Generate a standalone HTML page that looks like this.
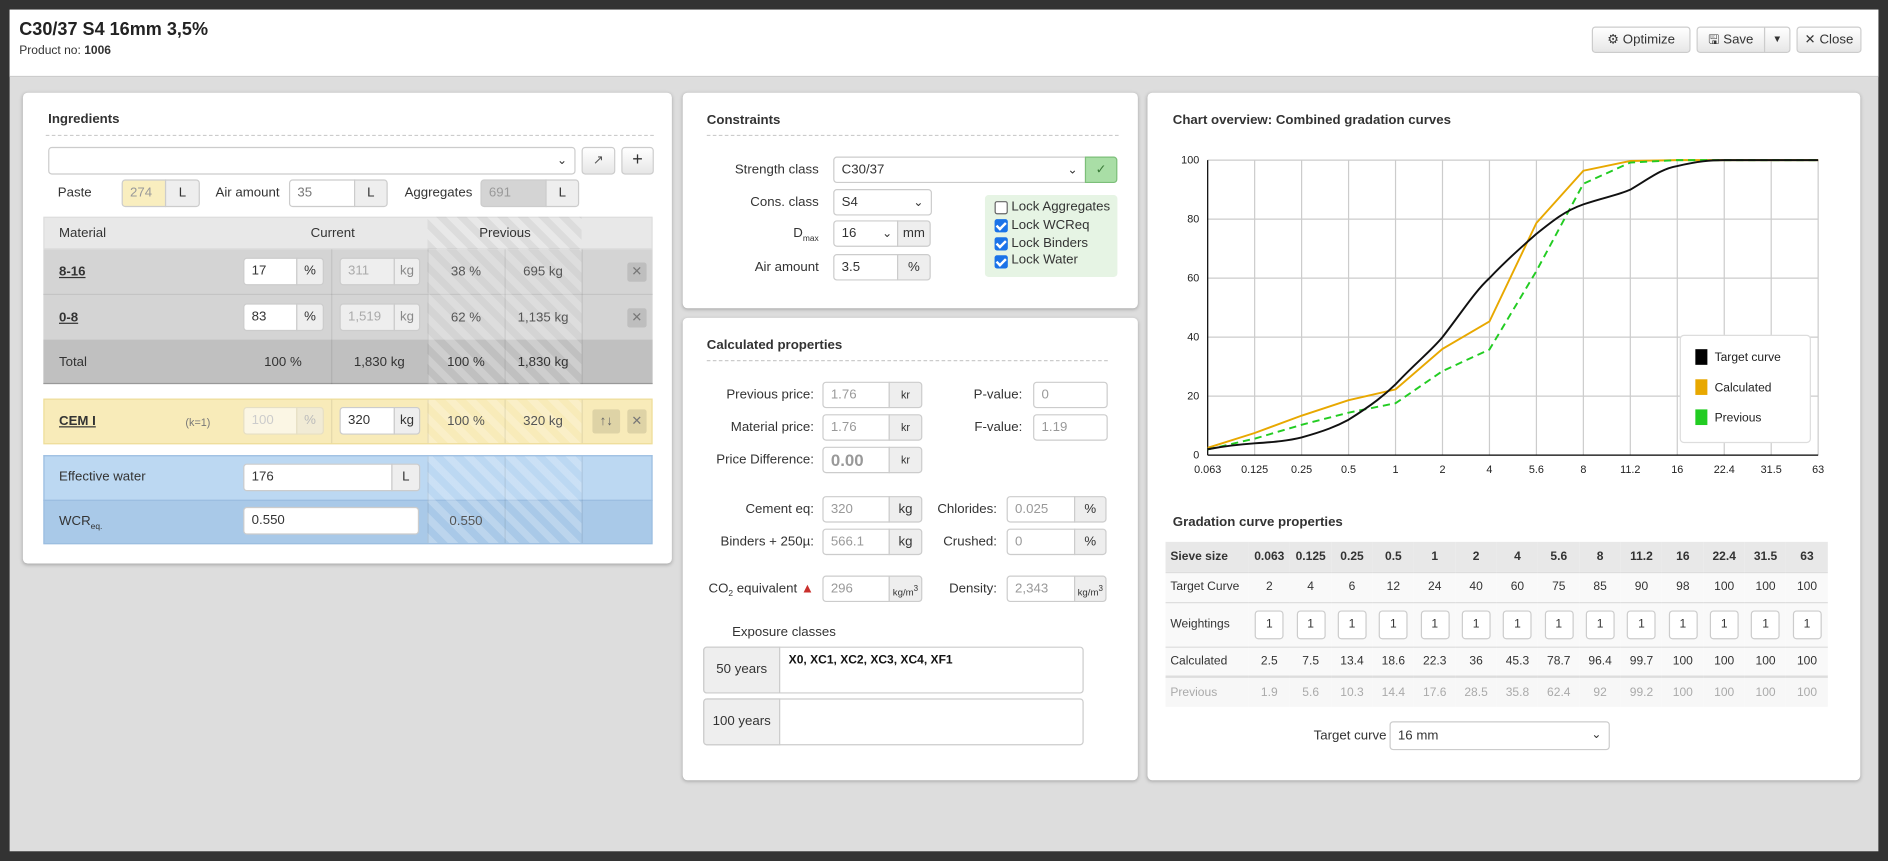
<!DOCTYPE html>
<html><head><meta charset="utf-8"><style>
*{box-sizing:border-box;margin:0;padding:0}
html,body{width:1888px;height:861px;overflow:hidden;background:#333}
#s{position:absolute;left:0;top:0;width:1568px;height:715px;transform:scale(1.20408);transform-origin:0 0;font-family:"Liberation Sans",Arial,sans-serif;font-size:11px;color:#333}
.a{position:absolute}
.p{position:absolute;background:#fff;border-radius:4px;box-shadow:0 1px 3px rgba(0,0,0,.25)}
.h{position:absolute;font-weight:bold;font-size:11px;color:#333}
.dl{position:absolute;border-top:1px dashed #ccc;height:0}
.in{position:absolute;border:1px solid #ccc;background:#fff;border-radius:3px 0 0 3px;padding:0 6px;line-height:21px;font-size:11px;color:#333}
.ad{position:absolute;border:1px solid #ccc;background:#eee;border-radius:0 3px 3px 0;text-align:center;line-height:21px;font-size:11px;color:#333}
.r{position:absolute;text-align:right}
.c{position:absolute;text-align:center}
.btn{position:absolute;border:1px solid #ccc;background:linear-gradient(#fff,#e6e6e6);border-radius:3px;text-align:center;line-height:20px;color:#333}
.hat{background-image:repeating-linear-gradient(45deg,rgba(255,255,255,.22) 0 6px,rgba(255,255,255,0) 6px 12px)}
.hatd{background-image:repeating-linear-gradient(45deg,rgba(0,0,0,.05) 0 6px,rgba(0,0,0,0) 6px 12px)}
.vl{position:absolute;width:1px;background:rgba(0,0,0,.08)}
.x{position:absolute;width:16px;height:16px;background:rgba(0,0,0,.1);border-radius:2px;text-align:center;line-height:16px;color:#777;font-size:11px}
.cb{position:absolute;width:11px;height:11px;border-radius:2px;background:#1a73e8}
.cb:after{content:"";position:absolute;left:3px;top:1px;width:3px;height:6px;border:solid #fff;border-width:0 2px 2px 0;transform:rotate(45deg)}
sub{font-size:7px;line-height:0}
td{text-align:center;height:25px}
.w{margin:auto;width:24px;height:24px;border:1px solid #ccc;border-radius:3px;background:#fff;line-height:22px}
</style></head><body><div id="s">
<div class="a" style="left:8px;top:8px;width:1552px;height:699px;background:#ddd"></div>
<div class="a" style="left:8px;top:8px;width:1552px;height:56px;background:#fff;border-bottom:1px solid #ccc"></div>
<div class="a" style="left:16px;top:16px;font-size:15px;font-weight:bold;color:#222">C30/37 S4 16mm 3,5%</div>
<div class="a" style="left:16px;top:37px;font-size:10px;color:#333">Product no: <b>1006</b></div>
<div class="btn" style="left:1322px;top:22px;width:82px;height:22px">⚙ Optimize</div>
<div class="btn" style="left:1409px;top:22px;width:57px;height:22px;border-radius:3px 0 0 3px">🖫 Save</div>
<div class="btn" style="left:1465px;top:22px;width:22px;height:22px;border-radius:0 3px 3px 0;font-size:8px">▼</div>
<div class="btn" style="left:1492px;top:22px;width:54px;height:22px">✕ Close</div>

<div class="p" style="left:19px;top:77px;width:539px;height:391px"></div>
<div class="h" style="left:40px;top:93px">Ingredients</div>
<div class="dl" style="left:38px;top:112px;width:505px"></div>
<div class="in" style="left:40px;top:122px;width:438px;height:23px;border-radius:3px"><span style="position:absolute;right:6px;top:0;font-size:10px">⌄</span></div>
<div class="btn" style="left:483px;top:122px;width:28px;height:23px;color:#555">↗</div>
<div class="btn" style="left:516px;top:122px;width:27px;height:23px;font-size:15px">+</div>
<div class="a" style="left:48px;top:154px">Paste</div>
<div class="in" style="left:101px;top:149px;width:37px;height:23px;background:#f9eebf;color:#999">274</div>
<div class="ad" style="left:137px;top:149px;width:29px;height:23px">L</div>
<div class="a" style="left:179px;top:154px">Air amount</div>
<div class="in" style="left:240px;top:149px;width:55px;height:23px;color:#777">35</div>
<div class="ad" style="left:294px;top:149px;width:28px;height:23px">L</div>
<div class="a" style="left:336px;top:154px">Aggregates</div>
<div class="in" style="left:399px;top:149px;width:55px;height:23px;background:#d4d4d4;color:#999">691</div>
<div class="ad" style="left:453px;top:149px;width:28px;height:23px">L</div>

<div class="a" style="left:36px;top:180px;width:506px;height:27px;background:#e8e8e8;border:1px solid #ddd"></div>
<div class="a hatd" style="left:355px;top:180px;width:128px;height:27px"></div>
<div class="a" style="left:49px;top:188px">Material</div>
<div class="a" style="left:258px;top:188px">Current</div>
<div class="a" style="left:398px;top:188px">Previous</div>
<div class="a" style="left:36px;top:207px;width:506px;height:75px;background:#d4d4d4"></div>
<div class="a" style="left:36px;top:244px;width:506px;height:1px;background:#c4c4c4"></div>
<div class="a" style="left:36px;top:282px;width:506px;height:37px;background:#c0c0c0;border-bottom:1px solid #999"></div>
<div class="a hat" style="left:355px;top:207px;width:128px;height:112px"></div>
<div class="vl" style="left:275px;top:207px;height:112px"></div><div class="vl" style="left:355px;top:207px;height:112px"></div><div class="vl" style="left:419px;top:207px;height:112px"></div><div class="vl" style="left:483px;top:207px;height:112px"></div>
<div class="a" style="left:49px;top:220px;font-weight:bold;text-decoration:underline">8-16</div>
<div class="in" style="left:202px;top:214px;width:45px;height:23px">17</div><div class="ad" style="left:246px;top:214px;width:23px;height:23px">%</div>
<div class="in" style="left:282px;top:214px;width:46px;height:23px;background:#eee;color:#aaa">311</div><div class="ad" style="left:327px;top:214px;width:22px;height:23px;color:#888">kg</div>
<div class="c" style="left:355px;top:220px;width:64px;color:#555">38 %</div><div class="c" style="left:419px;top:220px;width:64px;color:#555">695 kg</div>
<div class="x" style="left:521px;top:218px">✕</div>
<div class="a" style="left:49px;top:258px;font-weight:bold;text-decoration:underline">0-8</div>
<div class="in" style="left:202px;top:252px;width:45px;height:23px">83</div><div class="ad" style="left:246px;top:252px;width:23px;height:23px">%</div>
<div class="in" style="left:282px;top:252px;width:46px;height:23px;background:#eee;color:#aaa">1,519</div><div class="ad" style="left:327px;top:252px;width:22px;height:23px;color:#888">kg</div>
<div class="c" style="left:355px;top:258px;width:64px;color:#555">62 %</div><div class="c" style="left:419px;top:258px;width:64px;color:#555">1,135 kg</div>
<div class="x" style="left:521px;top:256px">✕</div>
<div class="a" style="left:49px;top:295px">Total</div>
<div class="c" style="left:205px;top:295px;width:60px">100 %</div>
<div class="c" style="left:280px;top:295px;width:70px">1,830 kg</div>
<div class="c" style="left:355px;top:295px;width:64px">100 %</div><div class="c" style="left:419px;top:295px;width:64px">1,830 kg</div>

<div class="a" style="left:36px;top:331px;width:506px;height:38px;background:#f8ebb9;border:1px solid #eedd99"></div>
<div class="a hat" style="left:355px;top:332px;width:128px;height:36px"></div>
<div class="vl" style="left:275px;top:332px;height:36px"></div><div class="vl" style="left:355px;top:332px;height:36px"></div><div class="vl" style="left:419px;top:332px;height:36px"></div><div class="vl" style="left:483px;top:332px;height:36px"></div>
<div class="a" style="left:49px;top:344px;font-weight:bold;text-decoration:underline">CEM I</div>
<div class="a" style="left:154px;top:346px;font-size:9px;color:#777">(k=1)</div>
<div class="in" style="left:202px;top:338px;width:45px;height:23px;background:#fbf6e4;color:#ccc;border-color:#e6dfc4">100</div><div class="ad" style="left:246px;top:338px;width:23px;height:23px;color:#bbb;background:#f1ebd5;border-color:#e6dfc4">%</div>
<div class="in" style="left:282px;top:338px;width:46px;height:23px">320</div><div class="ad" style="left:327px;top:338px;width:22px;height:23px">kg</div>
<div class="c" style="left:355px;top:344px;width:64px;color:#555">100 %</div><div class="c" style="left:419px;top:344px;width:64px;color:#555">320 kg</div>
<div class="x" style="left:492px;top:340px;width:23px;height:20px;line-height:20px;color:#666">↑↓</div>
<div class="x" style="left:521px;top:340px;height:20px;line-height:20px">✕</div>

<div class="a" style="left:36px;top:378px;width:506px;height:38px;background:#bcd8f2;border:1px solid #9bbde0;border-bottom:none"></div>
<div class="a" style="left:36px;top:415px;width:506px;height:37px;background:#a9c9e8;border:1px solid #9bbde0"></div>
<div class="a hat" style="left:355px;top:379px;width:128px;height:72px"></div>
<div class="vl" style="left:355px;top:379px;height:72px"></div><div class="vl" style="left:419px;top:379px;height:72px"></div><div class="vl" style="left:483px;top:379px;height:72px"></div>
<div class="a" style="left:49px;top:390px">Effective water</div>
<div class="in" style="left:202px;top:385px;width:124px;height:23px">176</div><div class="ad" style="left:325px;top:385px;width:24px;height:23px">L</div>
<div class="a" style="left:49px;top:427px">WCR<sub>eq.</sub></div>
<div class="in" style="left:202px;top:421px;width:146px;height:23px;border-radius:3px">0.550</div>
<div class="c" style="left:355px;top:427px;width:64px;color:#555">0.550</div>

<div class="p" style="left:567px;top:77px;width:378px;height:179px"></div>
<div class="h" style="left:587px;top:94px">Constraints</div>
<div class="dl" style="left:587px;top:112px;width:342px"></div>
<div class="r" style="left:560px;top:135px;width:120px">Strength class</div>
<div class="in" style="left:692px;top:130px;width:210px;height:22px">C30/37<span style="position:absolute;right:6px;font-size:10px">⌄</span></div>
<div class="a" style="left:901px;top:130px;width:27px;height:22px;background:#a9dea6;border:1px solid #7cbf79;border-radius:0 3px 3px 0;text-align:center;line-height:20px;color:#3a7a38">✓</div>
<div class="r" style="left:560px;top:162px;width:120px">Cons. class</div>
<div class="in" style="left:692px;top:157px;width:82px;height:22px;border-radius:3px">S4<span style="position:absolute;right:6px;font-size:10px">⌄</span></div>
<div class="r" style="left:560px;top:188px;width:120px">D<sub>max</sub></div>
<div class="in" style="left:692px;top:183px;width:54px;height:22px">16<span style="position:absolute;right:4px;font-size:10px">⌄</span></div><div class="ad" style="left:745px;top:183px;width:28px;height:22px">mm</div>
<div class="r" style="left:560px;top:216px;width:120px">Air amount</div>
<div class="in" style="left:692px;top:211px;width:54px;height:22px">3.5</div><div class="ad" style="left:745px;top:211px;width:28px;height:22px">%</div>
<div class="a" style="left:818px;top:162px;width:110px;height:68px;background:#e6f4e4;border-radius:3px"></div>
<div class="a" style="left:826px;top:167px;width:11px;height:11px;border:1px solid #666;border-radius:2px;background:#fff"></div>
<div class="a" style="left:840px;top:166px">Lock Aggregates</div>
<div class="cb" style="left:826px;top:182px"></div><div class="a" style="left:840px;top:181px">Lock WCReq</div>
<div class="cb" style="left:826px;top:197px"></div><div class="a" style="left:840px;top:196px">Lock Binders</div>
<div class="cb" style="left:826px;top:212px"></div><div class="a" style="left:840px;top:210px">Lock Water</div>

<div class="p" style="left:567px;top:264px;width:378px;height:384px"></div>
<div class="h" style="left:587px;top:281px">Calculated properties</div>
<div class="dl" style="left:587px;top:299px;width:333px"></div>
<div class="r" style="left:540px;top:322px;width:136px">Previous price:</div>
<div class="in" style="left:683px;top:317px;width:56px;height:22px;color:#999">1.76</div><div class="ad" style="left:738px;top:317px;width:28px;height:22px;font-size:9px">kr</div>
<div class="r" style="left:540px;top:349px;width:136px">Material price:</div>
<div class="in" style="left:683px;top:344px;width:56px;height:22px;color:#999">1.76</div><div class="ad" style="left:738px;top:344px;width:28px;height:22px;font-size:9px">kr</div>
<div class="r" style="left:540px;top:376px;width:136px">Price Difference:</div>
<div class="in" style="left:683px;top:371px;width:56px;height:22px;color:#999;font-weight:bold;font-size:14px">0.00</div><div class="ad" style="left:738px;top:371px;width:28px;height:22px;font-size:9px">kr</div>
<div class="r" style="left:760px;top:322px;width:89px">P-value:</div>
<div class="in" style="left:858px;top:317px;width:62px;height:22px;border-radius:3px;color:#999">0</div>
<div class="r" style="left:760px;top:349px;width:89px">F-value:</div>
<div class="in" style="left:858px;top:344px;width:62px;height:22px;border-radius:3px;color:#999">1.19</div>
<div class="r" style="left:540px;top:417px;width:136px">Cement eq:</div>
<div class="in" style="left:683px;top:412px;width:56px;height:22px;color:#999">320</div><div class="ad" style="left:738px;top:412px;width:28px;height:22px">kg</div>
<div class="r" style="left:540px;top:444px;width:136px">Binders + 250µ:</div>
<div class="in" style="left:683px;top:439px;width:56px;height:22px;color:#999">566.1</div><div class="ad" style="left:738px;top:439px;width:28px;height:22px">kg</div>
<div class="r" style="left:740px;top:417px;width:88px">Chlorides:</div>
<div class="in" style="left:836px;top:412px;width:57px;height:22px;color:#999">0.025</div><div class="ad" style="left:892px;top:412px;width:27px;height:22px">%</div>
<div class="r" style="left:740px;top:444px;width:88px">Crushed:</div>
<div class="in" style="left:836px;top:439px;width:57px;height:22px;color:#999">0</div><div class="ad" style="left:892px;top:439px;width:27px;height:22px">%</div>
<div class="r" style="left:540px;top:483px;width:136px">CO<sub>2</sub> equivalent <span style="color:#c9302c">▲</span></div>
<div class="in" style="left:683px;top:478px;width:56px;height:22px;color:#999">296</div><div class="ad" style="left:738px;top:478px;width:28px;height:22px;font-size:8px">kg/m<sup>3</sup></div>
<div class="r" style="left:740px;top:483px;width:88px">Density:</div>
<div class="in" style="left:836px;top:478px;width:57px;height:22px;color:#999">2,343</div><div class="ad" style="left:892px;top:478px;width:27px;height:22px;font-size:8px">kg/m<sup>3</sup></div>
<div class="a" style="left:608px;top:519px">Exposure classes</div>
<div class="a" style="left:584px;top:537px;width:316px;height:39px;border:1px solid #ccc;border-radius:3px;background:#fff"></div>
<div class="a" style="left:584px;top:537px;width:64px;height:39px;border:1px solid #ccc;background:#eee;border-radius:3px 0 0 3px;text-align:center;line-height:37px">50 years</div>
<div class="a" style="left:655px;top:543px;font-size:10px;font-weight:bold;color:#111">X0, XC1, XC2, XC3, XC4, XF1</div>
<div class="a" style="left:584px;top:580px;width:316px;height:39px;border:1px solid #ccc;border-radius:3px;background:#fff"></div>
<div class="a" style="left:584px;top:580px;width:64px;height:39px;border:1px solid #ccc;background:#eee;border-radius:3px 0 0 3px;text-align:center;line-height:37px">100 years</div>

<div class="p" style="left:953px;top:77px;width:592px;height:571px"></div>
<div class="h" style="left:974px;top:94px">Chart overview: Combined gradation curves</div>
<svg class="a" style="left:960px;top:120px" width="580" height="290" font-family="Liberation Sans,Arial,sans-serif" font-size="9" fill="#222">
<g stroke="#ccc" stroke-width="1">
<line x1="43" x2="550" y1="209" y2="209"/><line x1="43" x2="550" y1="160" y2="160"/><line x1="43" x2="550" y1="111" y2="111"/><line x1="43" x2="550" y1="62" y2="62"/><line x1="43" x2="550" y1="13" y2="13"/>
<line x1="82" x2="82" y1="13" y2="258"/><line x1="121" x2="121" y1="13" y2="258"/><line x1="160" x2="160" y1="13" y2="258"/><line x1="199" x2="199" y1="13" y2="258"/><line x1="238" x2="238" y1="13" y2="258"/><line x1="277" x2="277" y1="13" y2="258"/><line x1="316" x2="316" y1="13" y2="258"/><line x1="355" x2="355" y1="13" y2="258"/><line x1="394" x2="394" y1="13" y2="258"/><line x1="433" x2="433" y1="13" y2="258"/><line x1="472" x2="472" y1="13" y2="258"/><line x1="511" x2="511" y1="13" y2="258"/><line x1="550" x2="550" y1="13" y2="258"/>
</g>
<line x1="43" x2="43" y1="13" y2="258" stroke="#000"/><line x1="43" x2="550" y1="258" y2="258" stroke="#000"/>
<g text-anchor="end"><text x="36" y="261">0</text><text x="36" y="212">20</text><text x="36" y="163">40</text><text x="36" y="114">60</text><text x="36" y="65">80</text><text x="36" y="16">100</text></g>
<g text-anchor="middle"><text x="43" y="273">0.063</text><text x="82" y="273">0.125</text><text x="121" y="273">0.25</text><text x="160" y="273">0.5</text><text x="199" y="273">1</text><text x="238" y="273">2</text><text x="277" y="273">4</text><text x="316" y="273">5.6</text><text x="355" y="273">8</text><text x="394" y="273">11.2</text><text x="433" y="273">16</text><text x="472" y="273">22.4</text><text x="511" y="273">31.5</text><text x="550" y="273">63</text></g>
<polyline fill="none" stroke="#e8a800" stroke-width="1.6" points="43,251.9 82,239.6 121,225.2 160,212.4 199,203.4 238,169.8 277,147 316,65.2 355,21.8 394,13.7 433,13 472,13 511,13 550,13"/>
<polyline fill="none" stroke="#2c2" stroke-width="1.6" stroke-dasharray="6,4" points="43,253.3 82,244.3 121,232.8 160,222.7 199,214.9 238,188.2 277,170.3 316,105.1 355,32.6 394,15 433,13 472,13 511,13 550,13"/>
<path fill="none" stroke="#111" stroke-width="1.6" d="M43,253.1 C60,250 70,249 82,248.2 C100,247 110,246 121,243.3 C140,238 150,234 160,228.6 C180,216 190,208 199,199.2 C215,182 228,172 238,160 C255,138 265,122 277,111 C292,95 305,84 316,74.25 C330,63 340,55 355,49.75 C372,44 384,42 394,37.5 C410,28 420,20 433,17.9 C450,14 460,13 472,13 L550,13"/>
<rect x="435.5" y="158.5" width="108" height="89" rx="3" fill="#fff" stroke="#ddd"/>
<rect x="448" y="170" width="10" height="13" fill="#000"/><text x="464" y="180" font-size="10">Target curve</text>
<rect x="448" y="195" width="10" height="13" fill="#e8a800"/><text x="464" y="205" font-size="10">Calculated</text>
<rect x="448" y="220" width="10" height="13" fill="#2c2"/><text x="464" y="230" font-size="10">Previous</text>
</svg>
<div class="h" style="left:974px;top:428px">Gradation curve properties</div>
<table class="a" style="left:968px;top:450px;width:550px;border-collapse:collapse;font-size:10px;table-layout:fixed">
<colgroup><col style="width:69px"></colgroup>
<tr style="background:#e8e8e8;font-weight:bold;height:25px"><td style="text-align:left;padding-left:4px">Sieve size</td><td>0.063</td><td>0.125</td><td>0.25</td><td>0.5</td><td>1</td><td>2</td><td>4</td><td>5.6</td><td>8</td><td>11.2</td><td>16</td><td>22.4</td><td>31.5</td><td>63</td></tr>
<tr style="background:#f9f9f9;border-top:1px solid #ddd"><td style="text-align:left;padding-left:4px">Target Curve</td><td>2</td><td>4</td><td>6</td><td>12</td><td>24</td><td>40</td><td>60</td><td>75</td><td>85</td><td>90</td><td>98</td><td>100</td><td>100</td><td>100</td></tr>
<tr style="background:#f9f9f9;border-top:1px solid #ddd;height:37px"><td style="text-align:left;padding-left:4px">Weightings</td>
<td><div class="w">1</div></td><td><div class="w">1</div></td><td><div class="w">1</div></td><td><div class="w">1</div></td><td><div class="w">1</div></td><td><div class="w">1</div></td><td><div class="w">1</div></td><td><div class="w">1</div></td><td><div class="w">1</div></td><td><div class="w">1</div></td><td><div class="w">1</div></td><td><div class="w">1</div></td><td><div class="w">1</div></td><td><div class="w">1</div></td></tr>
<tr style="background:#f9f9f9;border-top:1px solid #ddd;border-bottom:2px solid #ddd"><td style="text-align:left;padding-left:4px">Calculated</td><td>2.5</td><td>7.5</td><td>13.4</td><td>18.6</td><td>22.3</td><td>36</td><td>45.3</td><td>78.7</td><td>96.4</td><td>99.7</td><td>100</td><td>100</td><td>100</td><td>100</td></tr>
<tr style="background:#f7f7f7;color:#aaa;height:21px"><td style="text-align:left;padding-left:4px">Previous</td><td>1.9</td><td>5.6</td><td>10.3</td><td>14.4</td><td>17.6</td><td>28.5</td><td>35.8</td><td>62.4</td><td>92</td><td>99.2</td><td>100</td><td>100</td><td>100</td><td>100</td></tr>
</table>
<div class="a" style="left:1091px;top:605px">Target curve</div>
<div class="in" style="left:1154px;top:599px;width:183px;height:24px;border-radius:3px;line-height:22px">16 mm<span style="position:absolute;right:6px;font-size:10px">⌄</span></div>
</div></body></html>
